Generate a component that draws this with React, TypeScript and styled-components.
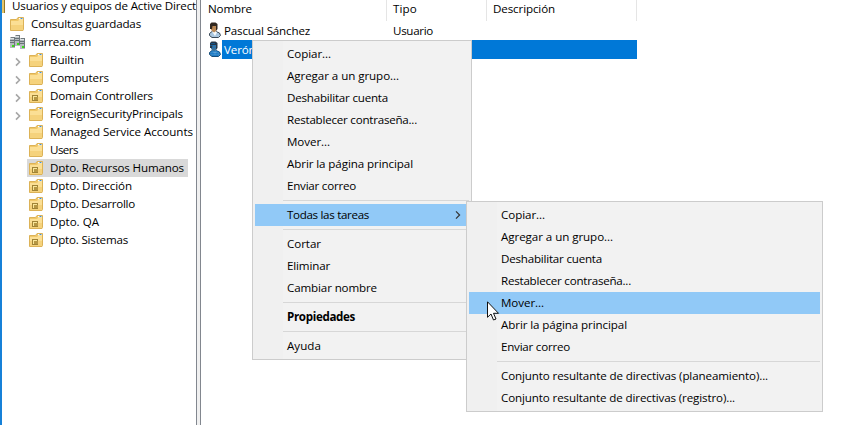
import React, { useLayoutEffect, useRef, useState } from "react";
import styled, { createGlobalStyle } from "styled-components";

const GlobalStyle = createGlobalStyle`
  * { box-sizing: border-box; }
  html, body { margin: 0; padding: 0; background: #fff; overflow: hidden; }
  body { font: 11.6px/18px "Open Sans", "Noto Sans", sans-serif; color: #000; }
`;

const Window = styled.div`
  position: relative;
  display: flex;
  width: 855px;
  height: 425px;
  overflow: hidden;
  background: #fff;
  cursor: default;
`;

const TreePane = styled.div`
  width: 196px;
  flex: none;
  overflow: hidden;
  border-left: 2px solid #1681d8;
`;

const Tree = styled.div`
  margin-top: -3px;
`;

const TreeRow = styled.div<{ $depth: number }>`
  display: flex;
  align-items: center;
  height: 18px;
  padding-left: ${(p) => [0, 6, 25][p.$depth]}px;
`;

const Expander = styled.div`
  width: 9px;
  height: 18px;
  margin: 3px 3px 0 -12px;
  display: flex;
  align-items: center;
`;

const NodeBody = styled.div<{ $selected?: boolean; $root?: boolean }>`
  display: flex;
  align-items: center;
  height: 18px;
  padding: 0 4px 0 ${(p) => (p.$root ? 0 : 2)}px;
  gap: ${(p) => (p.$root ? 7 : 6)}px;
  background: ${(p) => (p.$selected ? "#d9d9d9" : "transparent")};
`;

const Splitter = styled.div`
  width: 5px;
  flex: none;
  background: #f0f0f0;
  border: solid #82878f;
  border-width: 0 1px;
`;

const ListPane = styled.div`
  flex: 1;
`;

const columns = "186px 100px 150px";

const ListHeader = styled.div`
  display: grid;
  grid-template-columns: ${columns};
  height: 21px;
`;

const HeaderCell = styled.div`
  height: 21px;
  padding-left: 6px;
  line-height: 18px;
  border-right: 1px solid #e5e5e5;

  &:first-child {
    padding-left: 7px;
  }
`;

const ListRow = styled.div`
  display: grid;
  grid-template-columns: ${columns};
  height: 19px;
  line-height: 19px;
`;

const NameCell = styled.div`
  display: flex;
  align-items: center;
  padding-left: 7px;
`;

const Cell = styled.div<{ $selected?: boolean }>`
  padding-left: 6px;
  background: ${(p) => (p.$selected ? "#0078d7" : "transparent")};
`;

const NameText = styled.div<{ $selected?: boolean }>`
  flex: 1;
  height: 19px;
  padding-left: 2px;
  color: ${(p) => (p.$selected ? "#fff" : "#000")};
  background: ${(p) => (p.$selected ? "#0078d7" : "transparent")};
`;

const Menu = styled.div<{ $x: number; $y: number; $w: number }>`
  position: absolute;
  left: ${(p) => p.$x}px;
  top: ${(p) => p.$y}px;
  width: ${(p) => p.$w}px;
  padding: 2px;
  background: linear-gradient(to right, #f0f0f0 30px, #f2f2f2 30px);
  border: 1px solid #ccc;
`;

const MenuItem = styled.div<{ $active?: boolean; $bold?: boolean }>`
  display: flex;
  align-items: center;
  justify-content: space-between;
  height: 22px;
  padding: 0 8px 0 32px;
  font-weight: ${(p) => (p.$bold ? 700 : 400)};
  background: ${(p) => (p.$active ? "#91c9f7" : "transparent")};
`;

const MenuSeparator = styled.div`
  height: 1px;
  margin: 3px 0 3px 28px;
  background: #d7d7d7;
`;

const Pointer = styled.svg`
  position: absolute;
  left: 487px;
  top: 301px;
`;

const Fit = styled.span`
  display: inline-block;
  white-space: pre;
`;

/* Text whose tracking is adjusted so that it fills the given width. */
function Label({ text, width }: { text: string; width: number }) {
  const ref = useRef<HTMLSpanElement>(null);
  const [spacing, setSpacing] = useState(0);
  useLayoutEffect(() => {
    const natural = ref.current!.getBoundingClientRect().width;
    setSpacing((width - natural) / text.length);
  }, [text, width]);
  return (
    <Fit ref={ref} style={{ letterSpacing: `${spacing}px` }}>
      {text}
    </Fit>
  );
}

function FolderIcon({ unit }: { unit?: boolean }) {
  return (
    <svg width="15" height="16" viewBox="0 0 15 16">
      <path d="M.5 3.500h6l1.500-2h5.500v12l-.5 1H.5z" fill="#f0c869" stroke="#dcb257" />
      <path d="M1 5h7l1.500-1.500H13V13.500H1z" fill="#fbdf95" />
      <path d="M1 9h12v4.500H1z" fill="#f5d27c" />
      <path d="M9 2h4v1.300H9z" fill="#fff" />
      <path d="M10.500 2h2v1h-2z" fill="#3f8fd8" />
      {unit && (
        <>
          <path d="M3 7h6v6H3z" fill="#a08336" />
          <path d="M4 8h4v4H4z" fill="#f9e699" />
          <path d="M5 9h4v3H5z" fill="#b59643" />
        </>
      )}
    </svg>
  );
}

function DomainIcon() {
  const tower = (x: number, y: number) => (
    <g key={x}>
      <path d={`M${x} ${y + 1}l1-1h4v10l-1 1H${x}z`} fill="#70797d" />
      <path d={`M${x} ${y + 1}h4v10h-4z`} fill="#b4bbbe" />
      <path d={`M${x} ${y + 1}h4v1h-4z`} fill="#dde3e5" />
      <path d={`M${x} ${y + 3.5}h4M${x} ${y + 5.5}h4`} stroke="#687378" />
      <path d={`M${x + 2} ${y + 8}h2v2h-2z`} fill="#3bdc16" />
    </g>
  );
  return (
    <svg width="15" height="16" viewBox="0 0 15 16">
      {tower(5, 1)}
      {tower(0, 3)}
      {tower(10, 4)}
    </svg>
  );
}

function UserIcon({ selected }: { selected?: boolean }) {
  const c = selected
    ? { hair: "#253647", face: "#3c7199", body: "#3588c8", shirt: "#5b9fd2", line: "#174c78" }
    : { hair: "#30271f", face: "#b98754", body: "#a9c6df", shirt: "#f5f9fc", line: "#3c4a57" };
  return (
    <svg width="14" height="17" viewBox="0 0 14 17">
      <path d="M1.500 11.500L4 9.500h4l3.500 1.500 1 2.500-2 2H4l-2.500-2z" fill={c.body} stroke={c.line} />
      <path d="M4 9.500l3 4.500 2-3.500-2-2z" fill={c.shirt} />
      <path d="M3 2h5l1 3-1 4-2 1.500L3 8z" fill={c.face} />
      <path d="M2 7V2l1.500-1.500h4L9.500 2v5L8 9V4H4.500L4 7z" fill={c.hair} />
      {selected && (
        <path
          d="M3.500 2.500h4M2.500 4.500h5M4.500 6.500h4M3.500 10.500h7M2.500 12.500h8M4.500 14.500h6"
          stroke="#0873c8"
          strokeDasharray="1 1"
        />
      )}
    </svg>
  );
}

const Chevron = ({ color, w = 1.2 }: { color: string; w?: number }) => (
  <svg width="6" height="10" viewBox="0 0 6 10">
    <path d="M1 1.400L4.600 5 1 8.600" fill="none" stroke={color} strokeWidth={w} />
  </svg>
);

type Node = { text: string; width: number; unit?: boolean; open?: boolean; selected?: boolean };

const nodes: Node[] = [
  { text: "Builtin", width: 34, open: true },
  { text: "Computers", width: 59, open: true },
  { text: "Domain Controllers", width: 103, unit: true, open: true },
  { text: "ForeignSecurityPrincipals", width: 133, open: true },
  { text: "Managed Service Accounts", width: 143 },
  { text: "Users", width: 28 },
  { text: "Dpto. Recursos Humanos", width: 134, unit: true, selected: true },
  { text: "Dpto. Dirección", width: 82, unit: true },
  { text: "Dpto. Desarrollo", width: 85, unit: true },
  { text: "Dpto. QA", width: 49, unit: true },
  { text: "Dpto. Sistemas", width: 78, unit: true },
];

const RootEdge = styled.div`
  width: 3px;
  height: 14px;
  background: #e5c56a;
  border-right: 1px solid #937626;
`;

type Item = { text: string; width: number; active?: boolean; bold?: boolean; arrow?: boolean };

const common = (activeMove: boolean): Item[] => [
  { text: "Copiar...", width: 44 },
  { text: "Agregar a un grupo...", width: 112 },
  { text: "Deshabilitar cuenta", width: 101 },
  { text: "Restablecer contraseña...", width: 130 },
  { text: "Mover...", width: 43, active: activeMove },
  { text: "Abrir la página principal", width: 126 },
  { text: "Enviar correo", width: 69 },
];

const mainMenu: Item[][] = [
  common(false),
  [{ text: "Todas las tareas", width: 82, active: true, arrow: true }],
  [
    { text: "Cortar", width: 34 },
    { text: "Eliminar", width: 43 },
    { text: "Cambiar nombre", width: 90 },
  ],
  [{ text: "Propiedades", width: 68, bold: true }],
  [{ text: "Ayuda", width: 34 }],
];

const taskMenu: Item[][] = [
  common(true),
  [
    { text: "Conjunto resultante de directivas (planeamiento)...", width: 267 },
    { text: "Conjunto resultante de directivas (registro)...", width: 234 },
  ],
];

function MenuGroups({ groups }: { groups: Item[][] }) {
  return (
    <>
      {groups.map((group, i) => (
        <React.Fragment key={i}>
          {i > 0 && <MenuSeparator />}
          {group.map((item) => (
            <MenuItem key={item.text} $active={item.active} $bold={item.bold}>
              <Label text={item.text} width={item.width} />
              {item.arrow && <Chevron color="#333" />}
            </MenuItem>
          ))}
        </React.Fragment>
      ))}
    </>
  );
}

export default function App() {
  return (
    <Window>
      <GlobalStyle />
      <TreePane>
        <Tree>
          <TreeRow $depth={0}>
            <NodeBody $root>
              <RootEdge />
              <Label text="Usuarios y equipos de Active Direct" width={184} />
            </NodeBody>
          </TreeRow>
          <TreeRow $depth={1}>
            <NodeBody>
              <FolderIcon />
              <Label text="Consultas guardadas" width={110} />
            </NodeBody>
          </TreeRow>
          <TreeRow $depth={1}>
            <NodeBody>
              <DomainIcon />
              <Label text="flarrea.com" width={60} />
            </NodeBody>
          </TreeRow>
          {nodes.map((n) => (
            <TreeRow key={n.text} $depth={2}>
              {n.open && (
                <Expander>
                  <Chevron color="#a6a6a6" w={1.6} />
                </Expander>
              )}
              <NodeBody $selected={n.selected}>
                <FolderIcon unit={n.unit} />
                <Label text={n.text} width={n.width} />
              </NodeBody>
            </TreeRow>
          ))}
        </Tree>
      </TreePane>
      <Splitter />
      <ListPane>
        <ListHeader>
          <HeaderCell><Label text="Nombre" width={44} /></HeaderCell>
          <HeaderCell><Label text="Tipo" width={24} /></HeaderCell>
          <HeaderCell><Label text="Descripción" width={62} /></HeaderCell>
        </ListHeader>
        <ListRow>
          <NameCell>
            <UserIcon />
            <NameText><Label text="Pascual Sánchez" width={86} /></NameText>
          </NameCell>
          <Cell><Label text="Usuario" width={40} /></Cell>
        </ListRow>
        <ListRow>
          <NameCell>
            <UserIcon selected />
            <NameText $selected><Label text="Verónica" width={46} /></NameText>
          </NameCell>
          <Cell $selected />
          <Cell $selected />
        </ListRow>
      </ListPane>
      <Menu $x={252} $y={40} $w={220}>
        <MenuGroups groups={mainMenu} />
      </Menu>
      <Menu $x={466} $y={201} $w={357}>
        <MenuGroups groups={taskMenu} />
      </Menu>
      <Pointer width="13" height="20" viewBox="0 0 13 20">
        <path d="M.5 .8v15.500l3.500-3.300 2.500 6 2.500-1-2.500-5.700h5z" fill="#fff" stroke="#111" />
      </Pointer>
    </Window>
  );
}
